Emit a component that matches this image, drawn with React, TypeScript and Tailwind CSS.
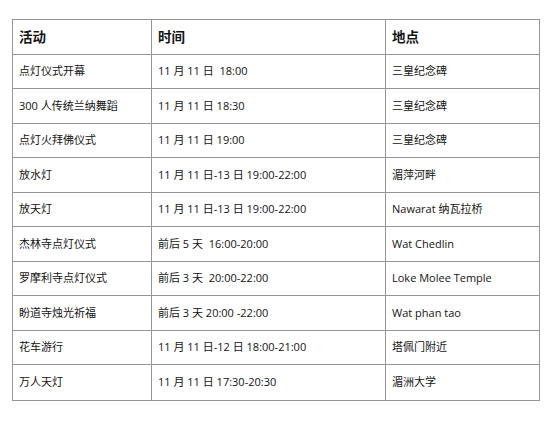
import React from "react";

const rows: [string, string, string][] = [
  ["点灯仪式开幕", "11 月 11 日  18:00", "三皇纪念碑"],
  ["300 人传统兰纳舞蹈", "11 月 11 日 18:30", "三皇纪念碑"],
  ["点灯火拜佛仪式", "11 月 11 日 19:00", "三皇纪念碑"],
  ["放水灯", "11 月 11 日-13 日 19:00-22:00", "湄萍河畔"],
  ["放天灯", "11 月 11 日-13 日 19:00-22:00", "Nawarat 纳瓦拉桥"],
  ["杰林寺点灯仪式", "前后 5 天  16:00-20:00", "Wat Chedlin"],
  ["罗摩利寺点灯仪式", "前后 3 天  20:00-22:00", "Loke Molee Temple"],
  ["盼道寺烛光祈福", "前后 3 天 20:00 -22:00", "Wat phan tao"],
  ["花车游行", "11 月 11 日-12 日 18:00-21:00", "塔佩门附近"],
  ["万人天灯", "11 月 11 日 17:30-20:30", "湄洲大学"],
];

export default function App() {
  return (
    <div
      className="w-[550px] h-[421px] bg-white pt-[19px] pl-[12px]"
      style={{ fontFamily: '"Open Sans", "Noto Sans CJK SC", sans-serif' }}
    >
      <div className="w-[528px] border border-[#959595] grid grid-cols-[139px_234px_153px] grid-rows-[repeat(11,34.5px)] text-[#141414]">
        {["活动", "时间", "地点"].map((h, i) => (
          <div
            key={h}
            className={`flex items-center pl-[6px] text-[13.5px] font-bold border-b border-[#959595] ${i < 2 ? "border-r" : ""}`}
          >
            {h}
          </div>
        ))}
        {rows.map((r, ri) =>
          r.map((c, ci) => (
            <div
              key={`${ri}-${ci}`}
              className={`flex items-center pl-[6px] text-[11px] whitespace-pre border-[#959595] ${ci < 2 ? "border-r" : ""} ${ri < rows.length - 1 ? "border-b" : ""}`}
            >
              {c}
            </div>
          ))
        )}
      </div>
    </div>
  );
}
